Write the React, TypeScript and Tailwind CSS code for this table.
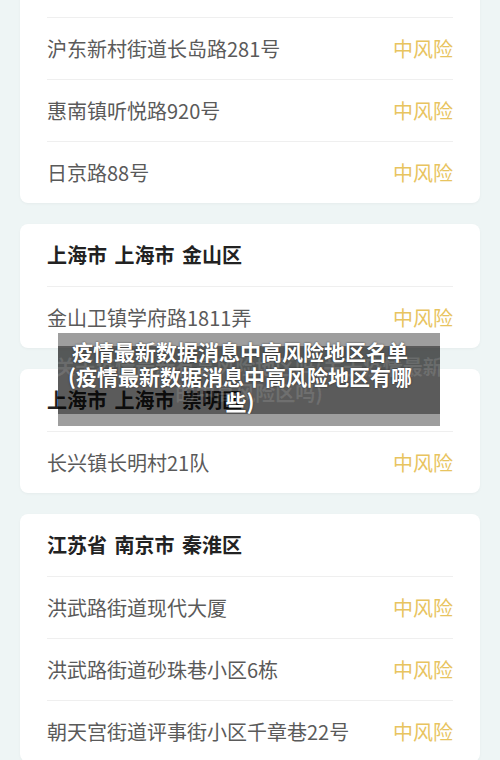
import React from "react";

type Card = { header: string; rows: string[] };

const cards: Card[] = [
  {
    header: "上海市 上海市 浦东新区",
    rows: ["沪东新村街道长岛路281号", "惠南镇听悦路920号", "日京路88号"],
  },
  { header: "上海市 上海市 金山区", rows: ["金山卫镇学府路1811弄"] },
  { header: "上海市 上海市 崇明区", rows: ["长兴镇长明村21队"] },
  {
    header: "江苏省 南京市 秦淮区",
    rows: ["洪武路街道现代大厦", "洪武路街道砂珠巷小区6栋", "朝天宫街道评事街小区千章巷22号"],
  },
];

const font = {
  fontFamily: '"Noto Sans CJK SC", "Noto Sans", sans-serif',
};

export default function App() {
  return (
    <div
      className="relative w-[500px] h-[760px] overflow-hidden bg-[#eef5f5]"
      style={font}
    >
      <div className="flex flex-col gap-[21px] px-5">
        {cards.map((c, i) => (
          <div
            key={i}
            className={`bg-white rounded-lg shadow-[0_1px_3px_rgba(0,0,0,0.04)] px-[27px] ${
              i === 0 ? "mt-[-45px]" : ""
            }`}
          >
            <div className="h-[62px] flex items-center text-[20px] font-bold text-[#222222] [word-spacing:3px]">
              {c.header}
            </div>
            {c.rows.map((r, j) => (
              <div
                key={j}
                className="h-[62px] border-t border-[#efefef] flex items-center justify-between"
              >
                <span className="text-[20px] text-[#5a5a5a]">{r}</span>
                <span className="text-[20px] text-[#e8c45f]">中风险</span>
              </div>
            ))}
          </div>
        ))}
      </div>

      <div className="absolute left-[58px] top-[333px] w-[382px] h-[93px] bg-black/[0.38]">
        <div className="absolute left-0 right-0 top-[13px] h-[68px] bg-black/[0.42] flex flex-col items-center justify-center overflow-hidden">
          <div className="text-[20px] leading-[26px] font-bold text-white/[0.12] whitespace-nowrap">
            关于疫情最新有高风险地区吗(关于疫情最新
          </div>
          <div className="text-[20px] leading-[26px] font-bold text-white/[0.12] whitespace-nowrap">
            的中高风险区吗)
          </div>
        </div>
        <div className="absolute inset-0 pl-[7px] pr-[25px] pt-[6px] text-center text-white font-bold text-[21px] leading-[25px] [text-shadow:0_0_2px_rgba(0,0,0,0.6)]">
          疫情最新数据消息中高风险地区名单(疫情最新数据消息中高风险地区有哪些)
        </div>
      </div>
    </div>
  );
}
